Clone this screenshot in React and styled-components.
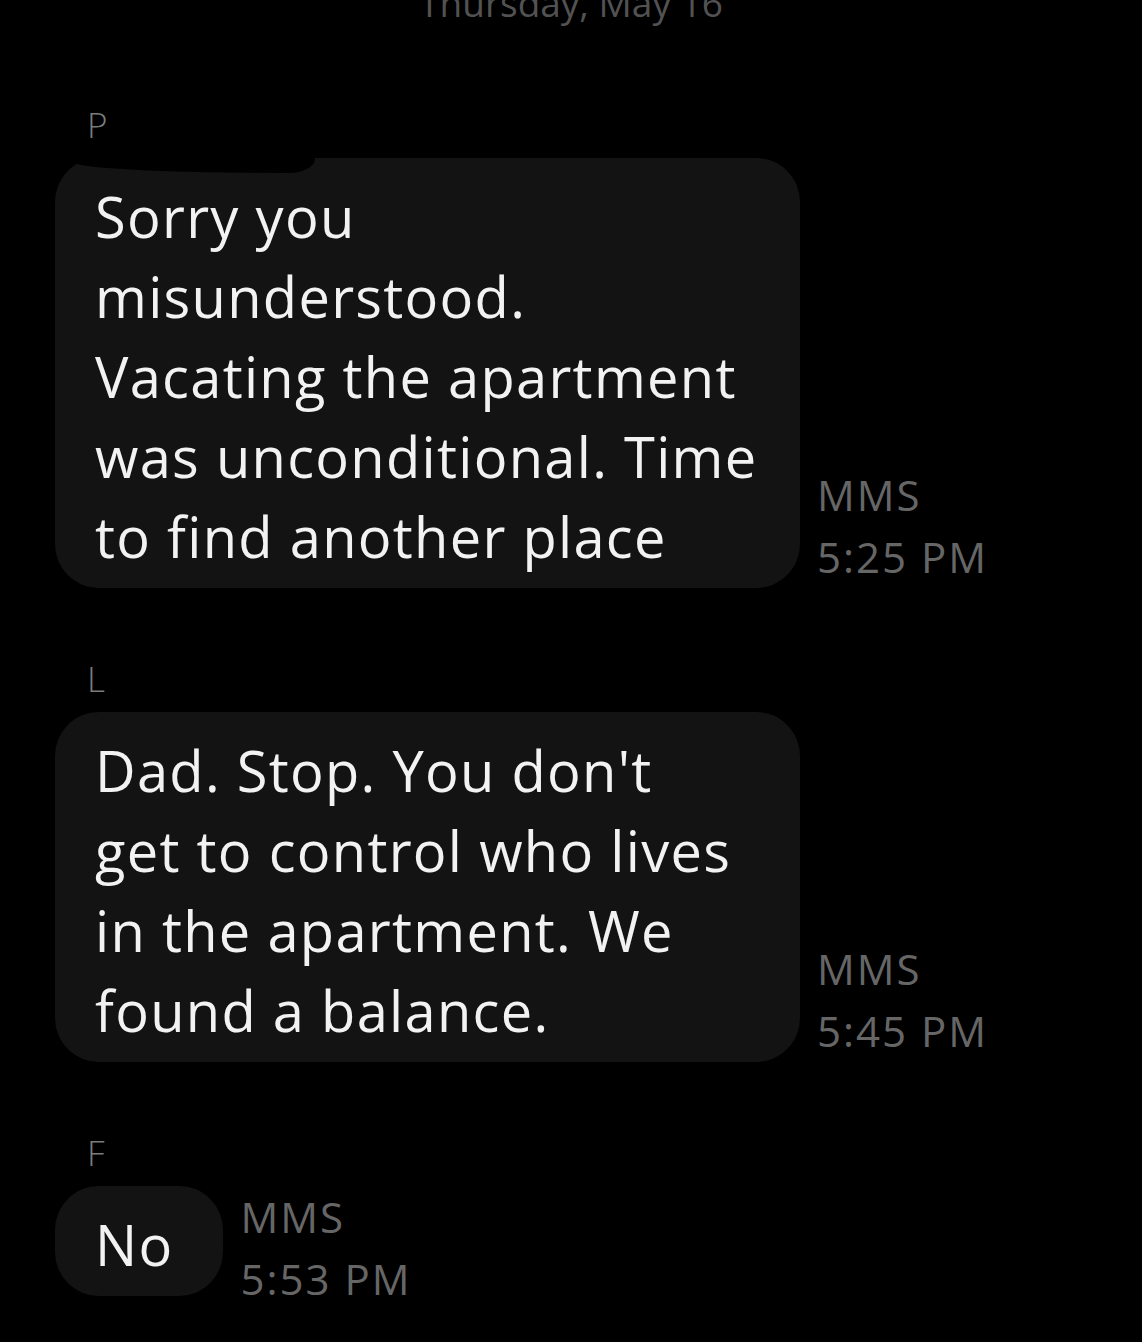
import React from "react";
import styled, { createGlobalStyle } from "styled-components";

const GlobalStyle = createGlobalStyle`
    html, body {
        margin: 0;
        padding: 0;
        background: #000000;
    }
    body {
        font-family: "Open Sans", "Noto Sans", sans-serif;
        -webkit-font-smoothing: antialiased;
    }
`;

const Screen = styled.div`
    width: 1142px;
    height: 1342px;
    overflow: hidden;
    background: #000000;
    display: flex;
    flex-direction: column;
    padding: 0 0 0 55px;
    box-sizing: border-box;
`;

const DateHeader = styled.div`
    margin: -25px 0 0 -55px;
    text-align: center;
    font-size: 37px;
    line-height: 56px;
    color: #525252;
`;

const Thread = styled.div`
    display: flex;
    flex-direction: column;
    margin-top: 74px;
    gap: 71px;
`;

const Group = styled.div`
    display: flex;
    flex-direction: column;
`;

const Sender = styled.div`
    margin-left: 32px;
    font-size: 35px;
    font-weight: 300;
    line-height: 40px;
    color: #7c7c7c;
    margin-bottom: 13px;
`;

const Row = styled.div`
    display: flex;
    gap: 17px;
`;

const Bubble = styled.div`
    position: relative;
    align-self: flex-start;
    width: ${({ $full }) => ($full ? "745px" : "auto")};
    box-sizing: border-box;
    padding: 18px 50px 12px 40px;
    border-radius: 44px;
    background: #131313;
    color: #f2f2f2;
    font-size: 56px;
    line-height: 80px;
    letter-spacing: 1.3px;
    white-space: nowrap;
`;

/* black redaction smear over the top edge of the first bubble */
const Smudge = styled.span`
    position: absolute;
    top: -2px;
    left: 20px;
    width: 240px;
    height: 17px;
    background: #000000;
    border-radius: 0 0 30px 100% / 0 0 16px 12px;
`;

const Line = styled.span`
    display: block;
`;

const Meta = styled.div`
    align-self: flex-end;
    display: flex;
    flex-direction: column;
    font-size: 42px;
    line-height: 62px;
    letter-spacing: 2px;
    color: #666666;
    white-space: nowrap;
`;

const messages = [
    {
        sender: "P",
        lines: ["Sorry you", "misunderstood.", "Vacating the apartment", "was unconditional. Time", "to find another place"],
        time: "5:25 PM",
        smudge: true,
    },
    {
        sender: "L",
        lines: ["Dad. Stop. You don't", "get to control who lives", "in the apartment. We", "found a balance."],
        time: "5:45 PM",
    },
    {
        sender: "F",
        lines: ["No"],
        time: "5:53 PM",
    },
];

export default function App() {
    return (
        <Screen>
            <GlobalStyle />
            <DateHeader>Thursday, May 16</DateHeader>
            <Thread>
                {messages.map((m) => (
                    <Group key={m.time}>
                        <Sender>{m.sender}</Sender>
                        <Row>
                            <Bubble $full={m.lines.length > 1}>
                                {m.smudge && <Smudge />}
                                {m.lines.map((l) => (
                                    <Line key={l}>{l}</Line>
                                ))}
                            </Bubble>
                            <Meta>
                                <span>MMS</span>
                                <span>{m.time}</span>
                            </Meta>
                        </Row>
                    </Group>
                ))}
            </Thread>
        </Screen>
    );
}
